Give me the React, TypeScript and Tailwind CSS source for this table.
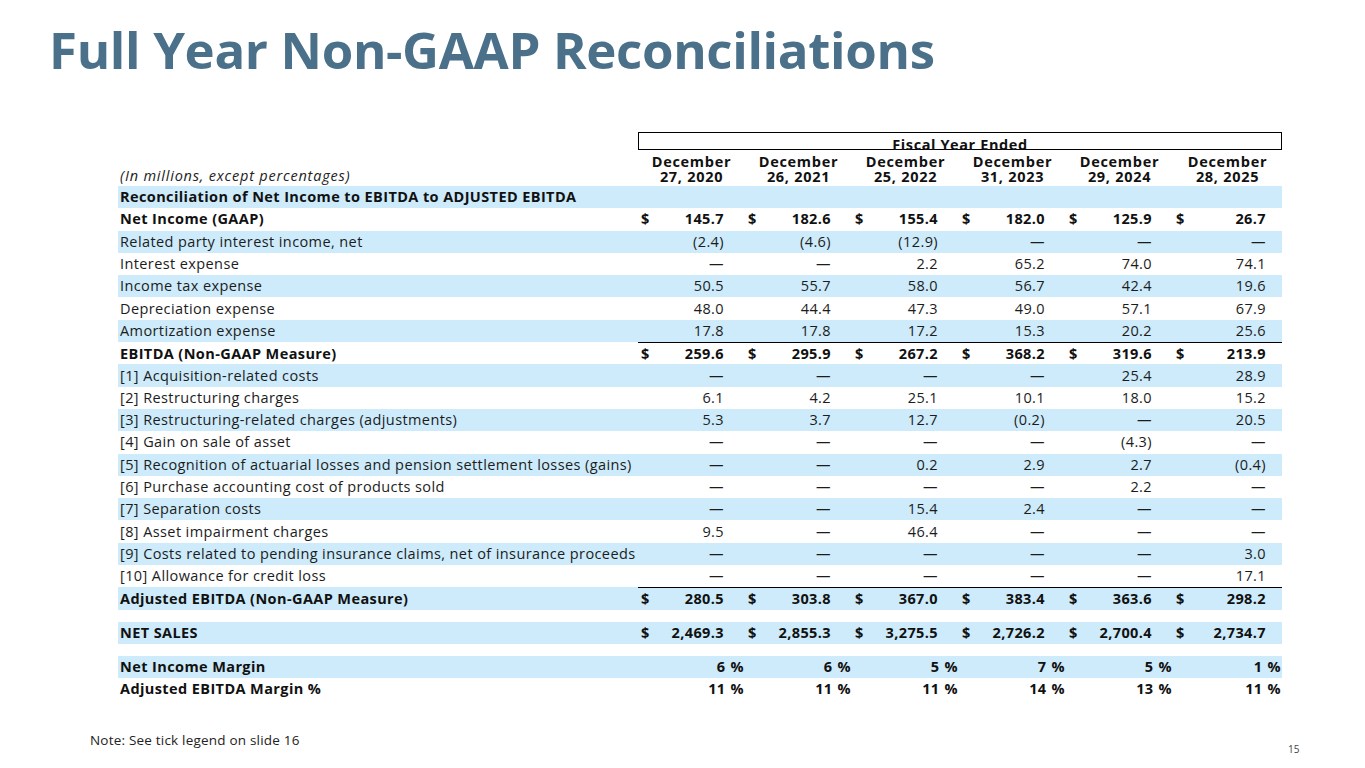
import React from 'react';

type Row = {
  label: string;
  bold?: boolean;
  blue?: boolean;
  dollar?: boolean;
  pct?: boolean;
  rule?: boolean;
  values?: string[];
  gapBefore?: boolean;
};

const D = '—';

const rows: Row[] = [
  { label: 'Reconciliation of Net Income to EBITDA to ADJUSTED EBITDA', bold: true, blue: true },
  { label: 'Net Income (GAAP)', bold: true, dollar: true, values: ['145.7', '182.6', '155.4', '182.0', '125.9', '26.7'] },
  { label: 'Related party interest income, net', blue: true, values: ['(2.4)', '(4.6)', '(12.9)', D, D, D] },
  { label: 'Interest expense', values: [D, D, '2.2', '65.2', '74.0', '74.1'] },
  { label: 'Income tax expense', blue: true, values: ['50.5', '55.7', '58.0', '56.7', '42.4', '19.6'] },
  { label: 'Depreciation expense', values: ['48.0', '44.4', '47.3', '49.0', '57.1', '67.9'] },
  { label: 'Amortization expense', blue: true, values: ['17.8', '17.8', '17.2', '15.3', '20.2', '25.6'] },
  { label: 'EBITDA (Non-GAAP Measure)', bold: true, dollar: true, rule: true, values: ['259.6', '295.9', '267.2', '368.2', '319.6', '213.9'] },
  { label: '[1] Acquisition-related costs', blue: true, values: [D, D, D, D, '25.4', '28.9'] },
  { label: '[2] Restructuring charges', values: ['6.1', '4.2', '25.1', '10.1', '18.0', '15.2'] },
  { label: '[3] Restructuring-related charges (adjustments)', blue: true, values: ['5.3', '3.7', '12.7', '(0.2)', D, '20.5'] },
  { label: '[4] Gain on sale of asset', values: [D, D, D, D, '(4.3)', D] },
  { label: '[5] Recognition of actuarial losses and pension settlement losses (gains)', blue: true, values: [D, D, '0.2', '2.9', '2.7', '(0.4)'] },
  { label: '[6] Purchase accounting cost of products sold', values: [D, D, D, D, '2.2', D] },
  { label: '[7] Separation costs', blue: true, values: [D, D, '15.4', '2.4', D, D] },
  { label: '[8] Asset impairment charges', values: ['9.5', D, '46.4', D, D, D] },
  { label: '[9] Costs related to pending insurance claims, net of insurance proceeds', blue: true, values: [D, D, D, D, D, '3.0'] },
  { label: '[10] Allowance for credit loss', values: [D, D, D, D, D, '17.1'] },
  { label: 'Adjusted EBITDA (Non-GAAP Measure)', bold: true, blue: true, dollar: true, rule: true, values: ['280.5', '303.8', '367.0', '383.4', '363.6', '298.2'] },
  { label: 'NET SALES', bold: true, blue: true, dollar: true, gapBefore: true, values: ['2,469.3', '2,855.3', '3,275.5', '2,726.2', '2,700.4', '2,734.7'] },
  { label: 'Net Income Margin', bold: true, blue: true, pct: true, gapBefore: true, values: ['6', '6', '5', '7', '5', '1'] },
  { label: 'Adjusted EBITDA Margin %', bold: true, pct: true, values: ['11', '11', '11', '14', '13', '11'] },
];

const dates = [
  ['December', '27, 2020'],
  ['December', '26, 2021'],
  ['December', '25, 2022'],
  ['December', '31, 2023'],
  ['December', '29, 2024'],
  ['December', '28, 2025'],
];

const cols = 'grid grid-cols-[520px_107px_107px_107px_107px_107px_109px]';

function ValueCell({ row, v, last }: { row: Row; v: string; last: boolean }) {
  if (row.pct) {
    return (
      <div className="flex h-full items-center justify-end pr-[1px]">
        <span>{v}</span>
        <span className="ml-[5px]">%</span>
      </div>
    );
  }
  return (
    <div className={`flex h-full items-center justify-between pl-[3px] ${last ? 'pr-[16px]' : 'pr-[21px]'}`}>
      <span>{row.dollar ? '$' : ''}</span>
      <span>{v}</span>
    </div>
  );
}

export default function App() {
  return (
    <div
      className="relative w-[1365px] h-[768px] bg-white overflow-hidden text-[#111]"
      style={{ fontFamily: '"Open Sans", "Liberation Sans", sans-serif' }}
    >
      <h1 className="pl-[49px] pt-[20px] text-[51px] leading-[58px] font-bold tracking-[-0.35px] text-[#4a7189]">
        Full Year Non-GAAP Reconciliations
      </h1>

      <div className="ml-[118px] mt-[54px] w-[1164px] text-[14.5px] tracking-[0.4px]">
        {/* header */}
        <div className={cols}>
          <div />
          <div className="col-span-6 h-[18px] border border-black text-center font-bold leading-[18px] tracking-[0.6px]">
            <span className="relative top-[3px]">Fiscal Year Ended</span>
          </div>
        </div>
        <div className={`${cols} h-[36px] items-end pb-[2px]`}>
          <div className="pl-[2px] italic leading-[15px] pb-[1px] text-[#222] tracking-[0.8px]">
            (In millions, except percentages)
          </div>
          {dates.map((d, i) => (
            <div key={i} className="text-center font-bold leading-[15px] tracking-[0.7px]">
              <div>{d[0]}</div>
              <div>{d[1]}</div>
            </div>
          ))}
        </div>

        {/* body */}
        {rows.map((row, i) => (
          <div key={i} className={row.gapBefore ? 'pt-[12px]' : ''}>
            <div
              className={`${cols} h-[22.3px] items-center leading-[22px] ${row.blue ? 'bg-[#cdebfa]' : ''} ${row.bold ? 'font-bold' : 'font-normal text-[#1c1c1c]'}`}
            >
              <div className="pl-[2px] whitespace-nowrap">{row.label}</div>
              {row.values
                ? row.values.map((v, j) => (
                    <div key={j} className={`h-full ${row.rule ? 'border-t-[1.5px] border-black' : ''}`}>
                      <ValueCell row={row} v={v} last={j === 5} />
                    </div>
                  ))
                : null}
            </div>
          </div>
        ))}
      </div>

      <div className="absolute left-[90px] top-[730px] text-[13.5px] tracking-[0.2px] text-[#222]">
        Note: See tick legend on slide 16
      </div>
      <div className="absolute left-[1288px] top-[742px] text-[10px] text-[#444]">15</div>
    </div>
  );
}
